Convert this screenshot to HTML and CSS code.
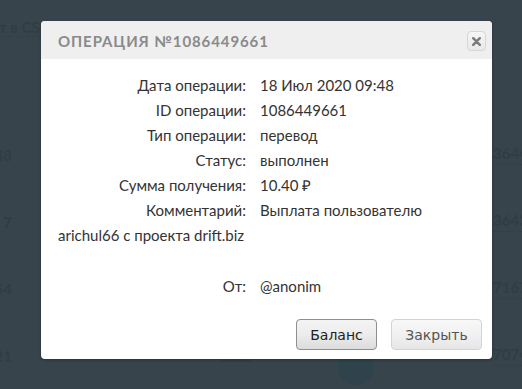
FILE: index.html
```html
<!DOCTYPE html>
<html lang="ru">
<head>
  <meta charset="UTF-8" />
  <title>Операция №1086449661</title>
  <link rel="stylesheet" href="styles.css">
</head>
<body>

  <div class="page">
    <div class="page-head"><span class="export">т в CSV</span></div>
    <div class="page-row"><span class="cell-left">48</span><span class="cell-right">3644</span></div>
    <div class="page-row"><span class="cell-left">7</span><span class="cell-right">3643</span></div>
    <div class="page-row"><span class="cell-left">54</span><span class="cell-right">7167</span></div>
    <div class="page-row"><span class="cell-left">21</span><span class="cell-mid">.........</span><span class="avatar"></span><span class="cell-right">7074</span></div>
  </div>

  <div class="dialog">
    <div class="dialog-head">
      <span class="dialog-title">ОПЕРАЦИЯ №1086449661</span>
      <button class="close-btn" title="Закрыть">
        <svg width="9" height="9" viewBox="0 0 9 9"><path d="M1.2 1.2 7.8 7.8M7.8 1.2 1.2 7.8" stroke="#7a7a7a" stroke-width="2.4" stroke-linecap="round"/></svg>
      </button>
    </div>

    <div class="dialog-body">
      <div class="row"><span class="label">Дата операции:</span>18 Июл 2020 09:48</div>
      <div class="row"><span class="label">ID операции:</span>1086449661</div>
      <div class="row"><span class="label">Тип операции:</span>перевод</div>
      <div class="row"><span class="label">Статус:</span>выполнен</div>
      <div class="row"><span class="label">Сумма получения:</span>10.40 ₽</div>
      <div class="row"><span class="label">Комментарий:</span>Выплата пользователю<br>arichul66 с проекта drift.biz</div>
      <div class="row row-from"><span class="label">От:</span>@anonim</div>
    </div>

    <div class="dialog-foot">
      <button class="btn btn-main">Баланс</button>
      <button class="btn btn-close">Закрыть</button>
    </div>
  </div>

</body>
</html>
```

FILE: styles.css
```css
html, body {
  margin: 0;
  height: 100%;
}
body {
  background: #37444b;
  font-family: Lato, "Open Sans", sans-serif;
  overflow: hidden;
}

/* page behind the overlay */
.page {
  color: #313d43;
  font-size: 15px;
  font-weight: bold;
}
.page-head {
  height: 37px;
  padding-top: 18px;
  box-sizing: border-box;
}
.export {
  display: inline-block;
  margin-left: -1px;
  width: 48px;
  overflow: hidden;
  white-space: nowrap;
  border-bottom: 1px dotted #313d43;
}
.page-row {
  display: flex;
  align-items: center;
  height: 67px;
}
.page-head + .page-row { margin-top: 84px; }
.cell-left {
  width: 12px;
  text-align: right;
  white-space: nowrap;
  overflow: hidden;
  direction: rtl;
}
.cell-mid {
  margin-left: 208px;
  width: 60px;
}
.avatar {
  width: 36px;
  height: 36px;
  border-radius: 50%;
  background: #2f434d;
  margin-left: 58px;
  margin-top: 22px;
}
.cell-right {
  margin-left: auto;
  width: 29px;
  padding-bottom: 2px;
  overflow: hidden;
  white-space: nowrap;
  border-bottom: 1px dotted #313d43;
}

/* dialog */
.dialog {
  position: absolute;
  left: 41px;
  top: 21px;
  width: 451px;
  height: 338px;
  background: #fff;
  border-radius: 4px;
  box-shadow: 0 1px 3px rgba(0, 0, 0, 0.3);
  overflow: hidden;
  color: #333;
}
.dialog-head {
  display: flex;
  align-items: center;
  height: 38px;
  padding: 0 6px 0 17px;
  background: #efefef;
}
.dialog-title {
  flex: 1;
  font-size: 15px;
  font-weight: bold;
  letter-spacing: 0.9px;
  color: #8a8a8a;
  padding-top: 1px;
}
.close-btn {
  display: flex;
  align-items: center;
  justify-content: center;
  width: 19px;
  height: 20px;
  padding: 0;
  background: linear-gradient(#f6f6f6, #e8e8e8);
  border: 1px solid #d6d6d6;
  border-radius: 4px;
  margin-top: 2px;
}

.dialog-body {
  padding: 14px 17px 0;
  font-size: 15px;
  line-height: 25px;
}
.label {
  display: inline-block;
  width: 188px;
  margin-right: 14px;
  text-align: right;
}
.row-from {
  margin-top: 26px;
}

.dialog-foot {
  display: flex;
  justify-content: flex-end;
  gap: 14px;
  padding: 20px 10px 0;
}
.btn {
  height: 31px;
  font-family: "DejaVu Sans", Verdana, sans-serif;
  font-size: 14px;
  border-radius: 4px;
  padding: 0;
}
.btn-main {
  width: 81px;
  color: #222;
  border: 1px solid #8f8f8f;
  background: linear-gradient(#f4f4f4 0%, #ececec 50%, #dcdcdc 100%);
}
.btn-close {
  width: 91px;
  color: #555;
  border: 1px solid #d3d3d3;
  background: linear-gradient(#f8f8f8 0%, #f1f1f1 50%, #e6e6e6 100%);
}
```
